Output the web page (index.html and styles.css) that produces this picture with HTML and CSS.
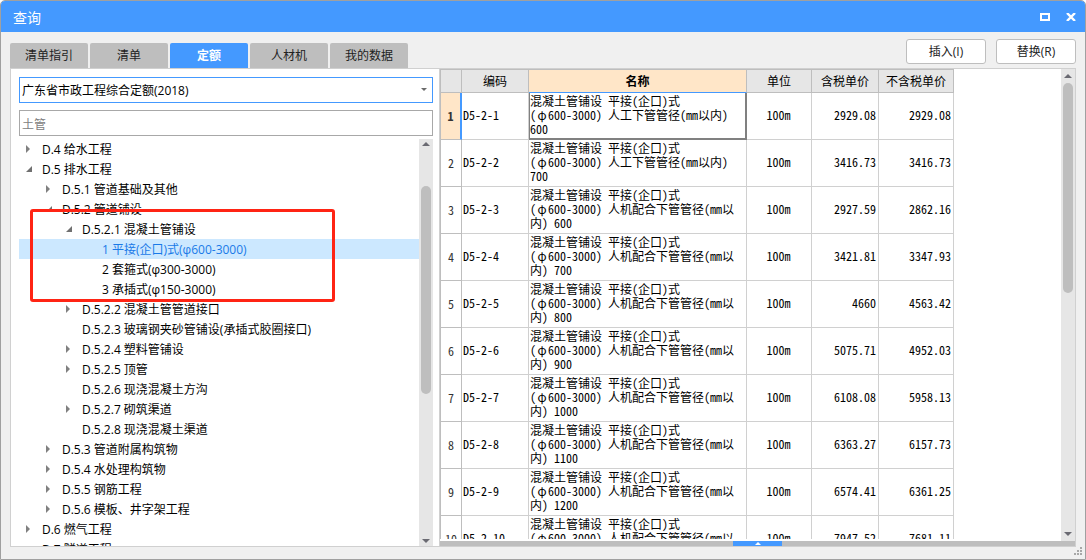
FILE: index.html
```html
<!DOCTYPE html>
<html lang="zh-CN">
<head>
<meta charset="utf-8">
<title>查询</title>
<link rel="stylesheet" href="styles.css">
</head>
<body>
<div class="window">
  <header class="titlebar">
    <h1 class="title">查询</h1>
    <div class="window-buttons">
      <button class="win-btn" type="button" aria-label="最大化"><svg width="10" height="8" viewBox="0 0 10 8"><path d="M0 0H10V8H0ZM2 2V6H8V2Z" fill="#fff" fill-rule="evenodd"/></svg></button>
      <button class="win-btn" type="button" aria-label="关闭"><svg width="10" height="8" viewBox="0 0 10 8"><path d="M1 0L9 8M9 0L1 8" fill="none" stroke="#fff" stroke-width="2.400"/></svg></button>
    </div>
  </header>

  <div class="toolbar">
    <nav class="tabs">
      <button class="tab" type="button">清单指引</button>
      <button class="tab" type="button">清单</button>
      <button class="tab active" type="button">定额</button>
      <button class="tab" type="button">人材机</button>
      <button class="tab" type="button">我的数据</button>
    </nav>
    <div class="actions">
      <button class="action" type="button">插入(I)</button>
      <button class="action" type="button">替换(R)</button>
    </div>
  </div>

  <main class="content">
    <section class="side">
      <div class="select-wrap">
        <select class="library" aria-label="定额库"><option>广东省市政工程综合定额(2018)</option></select>
        <svg class="caret" width="6" height="3" viewBox="0 0 6 3"><path d="M0 0H6L3 3Z" fill="#6a6a6a"/></svg>
      </div>
      <input class="search" type="text" aria-label="搜索" placeholder="土管">
      <div class="tree-area">
        <ul class="tree">
          <li class="node l0 closed"><span class="label">D.4 给水工程</span></li>
          <li class="node l0 open"><span class="label">D.5 排水工程</span></li>
          <li class="node l1 closed"><span class="label">D.5.1 管道基础及其他</span></li>
          <li class="node l1 open"><span class="label">D.5.2 管道铺设</span></li>
          <li class="node l2 open"><span class="label">D.5.2.1 混凝土管铺设</span></li>
          <li class="node l3 selected"><span class="label">1 平接(企口)式(φ600-3000)</span></li>
          <li class="node l3"><span class="label">2 套箍式(φ300-3000)</span></li>
          <li class="node l3"><span class="label">3 承插式(φ150-3000)</span></li>
          <li class="node l2 closed"><span class="label">D.5.2.2 混凝土管管道接口</span></li>
          <li class="node l2"><span class="label">D.5.2.3 玻璃钢夹砂管铺设(承插式胶圈接口)</span></li>
          <li class="node l2 closed"><span class="label">D.5.2.4 塑料管铺设</span></li>
          <li class="node l2 closed"><span class="label">D.5.2.5 顶管</span></li>
          <li class="node l2"><span class="label">D.5.2.6 现浇混凝土方沟</span></li>
          <li class="node l2 closed"><span class="label">D.5.2.7 砌筑渠道</span></li>
          <li class="node l2"><span class="label">D.5.2.8 现浇混凝土渠道</span></li>
          <li class="node l1 closed"><span class="label">D.5.3 管道附属构筑物</span></li>
          <li class="node l1 closed"><span class="label">D.5.4 水处理构筑物</span></li>
          <li class="node l1 closed"><span class="label">D.5.5 钢筋工程</span></li>
          <li class="node l1 closed"><span class="label">D.5.6 模板、井字架工程</span></li>
          <li class="node l0 closed"><span class="label">D.6 燃气工程</span></li>
          <li class="node l0"><span class="label">D.7 隧道工程</span></li>
        </ul>
        <div class="scrollbar tree-scroll">
          <svg width="8" height="4" viewBox="0 0 8 4"><path d="M0 4L4 0L8 4Z" fill="#6a6a72"/></svg>
          <div class="track"><div class="thumb tree-thumb"></div></div>
          <svg width="8" height="4" viewBox="0 0 8 4"><path d="M0 0H8L4 4Z" fill="#6a6a72"/></svg>
        </div>
        <div class="highlight"></div>
      </div>
    </section>

    <section class="main">
      <div class="grid-area">
        <div class="grid-clip">
          <table class="grid">
            <colgroup><col class="c-num"><col class="c-code"><col class="c-name"><col class="c-unit"><col class="c-tax"><col class="c-net"></colgroup>
            <thead>
              <tr><th></th><th>编码</th><th class="current">名称</th><th>单位</th><th>含税单价</th><th>不含税单价</th></tr>
            </thead>
            <tbody>
              <tr class="current-row"><th>1</th><td>D5-2-1</td><td class="cell-active">混凝土管铺设 平接(企口)式<br>(<span class="phi">φ</span>600-3000) 人工下管管径(mm以内)<br>600</td><td class="unit">100m</td><td class="price">2929.08</td><td class="price">2929.08</td></tr>
              <tr><th>2</th><td>D5-2-2</td><td>混凝土管铺设 平接(企口)式<br>(<span class="phi">φ</span>600-3000) 人工下管管径(mm以内)<br>700</td><td class="unit">100m</td><td class="price">3416.73</td><td class="price">3416.73</td></tr>
              <tr><th>3</th><td>D5-2-3</td><td>混凝土管铺设 平接(企口)式<br>(<span class="phi">φ</span>600-3000) 人机配合下管管径(mm以<br>内) 600</td><td class="unit">100m</td><td class="price">2927.59</td><td class="price">2862.16</td></tr>
              <tr><th>4</th><td>D5-2-4</td><td>混凝土管铺设 平接(企口)式<br>(<span class="phi">φ</span>600-3000) 人机配合下管管径(mm以<br>内) 700</td><td class="unit">100m</td><td class="price">3421.81</td><td class="price">3347.93</td></tr>
              <tr><th>5</th><td>D5-2-5</td><td>混凝土管铺设 平接(企口)式<br>(<span class="phi">φ</span>600-3000) 人机配合下管管径(mm以<br>内) 800</td><td class="unit">100m</td><td class="price">4660</td><td class="price">4563.42</td></tr>
              <tr><th>6</th><td>D5-2-6</td><td>混凝土管铺设 平接(企口)式<br>(<span class="phi">φ</span>600-3000) 人机配合下管管径(mm以<br>内) 900</td><td class="unit">100m</td><td class="price">5075.71</td><td class="price">4952.03</td></tr>
              <tr><th>7</th><td>D5-2-7</td><td>混凝土管铺设 平接(企口)式<br>(<span class="phi">φ</span>600-3000) 人机配合下管管径(mm以<br>内) 1000</td><td class="unit">100m</td><td class="price">6108.08</td><td class="price">5958.13</td></tr>
              <tr><th>8</th><td>D5-2-8</td><td>混凝土管铺设 平接(企口)式<br>(<span class="phi">φ</span>600-3000) 人机配合下管管径(mm以<br>内) 1100</td><td class="unit">100m</td><td class="price">6363.27</td><td class="price">6157.73</td></tr>
              <tr><th>9</th><td>D5-2-9</td><td>混凝土管铺设 平接(企口)式<br>(<span class="phi">φ</span>600-3000) 人机配合下管管径(mm以<br>内) 1200</td><td class="unit">100m</td><td class="price">6574.41</td><td class="price">6361.25</td></tr>
              <tr><th>10</th><td>D5-2-10</td><td>混凝土管铺设 平接(企口)式<br>(<span class="phi">φ</span>600-3000) 人机配合下管管径(mm以<br>内) 1350</td><td class="unit">100m</td><td class="price">7947.52</td><td class="price">7681.11</td></tr>
            </tbody>
          </table>
        </div>
        <div class="scrollbar grid-scroll">
          <svg width="8" height="4" viewBox="0 0 8 4"><path d="M0 4L4 0L8 4Z" fill="#6a6a72"/></svg>
          <div class="track"><div class="thumb grid-thumb"></div></div>
          <svg width="8" height="4" viewBox="0 0 8 4"><path d="M0 0H8L4 4Z" fill="#6a6a72"/></svg>
        </div>
      </div>
      <div class="splitter"><button class="splitter-handle" type="button" aria-label="展开"><svg width="6" height="3" viewBox="0 0 6 3"><path d="M0 3L3 0L6 3Z" fill="#fff"/></svg></button></div>
    </section>
  </main>
  <footer class="statusbar">
    <svg width="8" height="8" viewBox="0 0 8 8"><path d="M6 0h2v2h-2zM3 3h2v2h-2zM6 3h2v2h-2zM0 6h2v2h-2zM3 6h2v2h-2zM6 6h2v2h-2z" fill="#a8a8a8"/></svg>
  </footer>
</div>
</body>
</html>
```

FILE: styles.css
```css
* { box-sizing: border-box; }

body {
  margin: 0;
  background: #fff;
  color: #000;
  font: 12px/20px "Open Sans", "Noto Sans CJK SC", sans-serif;
}

button, input, select { font: inherit; color: inherit; margin: 0; }
button { padding: 0; border: 0; }
svg { display: block; flex: none; }

.window {
  display: flex;
  flex-direction: column;
  height: 100vh;
  border: 1px solid #a0a0a0;
  border-radius: 5px 5px 0 0;
  background: #f0f0f0;
  overflow: hidden;
}

.titlebar {
  display: flex;
  justify-content: space-between;
  align-items: center;
  flex: none;
  height: 31px;
  padding: 0 9px 0 12px;
  background: #4499ff;
  color: #fff;
}
.title { margin: 2px 0 0; font-size: 14px; font-weight: 400; }
.window-buttons { display: flex; gap: 16px; }
.win-btn { background: none; }

.toolbar {
  display: flex;
  justify-content: space-between;
  align-items: flex-end;
  flex: none;
  height: 36px;
  padding: 0 9px;
}
.tabs { display: flex; gap: 2px; }
.tab {
  width: 78px;
  height: 25px;
  border-radius: 2px 2px 0 0;
  background: #bebebe;
  color: #222;
}
.tab.active { background: #4499ff; color: #fff; font-weight: 700; }
.actions { display: flex; gap: 10px; padding-bottom: 4px; }
.action {
  width: 80px;
  height: 25px;
  border: 1px solid #bebebe;
  border-radius: 3px;
  background: #fff;
  color: #222;
}

.content {
  display: flex;
  flex: 1;
  min-height: 0;
  margin: 0 9px;
  border: 1px solid #d0d0d0;
  background: #fff;
}

.side {
  display: flex;
  flex-direction: column;
  flex: 0 0 428px;
  padding: 8px 5px 0 8px;
}
.select-wrap { position: relative; flex: none; margin-bottom: 7px; }
.library {
  display: block;
  appearance: none;
  width: 100%;
  height: 26px;
  padding: 2px 16px 0 2px;
  border: 1px solid #4499ff;
  border-radius: 0;
  background: #fff;
}
.caret { position: absolute; right: 6px; top: 11px; }
.search {
  flex: none;
  width: 100%;
  height: 26px;
  padding: 2px 2px 0;
  border: 1px solid #a8a8a8;
  background: #fff;
}
.search::placeholder { color: #808080; opacity: 1; }
.side > .select-wrap, .side > .search { width: 414px; }

.tree-area {
  position: relative;
  display: flex;
  flex: 1;
  min-height: 0;
  width: 414px;
  margin-top: 3px;
}
.tree {
  flex: 1;
  margin: 0;
  padding: 0;
  overflow: hidden;
  list-style: none;
}
.node {
  display: flex;
  align-items: center;
  height: 20px;
  white-space: nowrap;
}
.label { padding-top: 2px; }
.node::before { content: ""; width: 16px; height: 8px; flex: none; }
.closed::before {
  background: #808080;
  clip-path: polygon(0 0, 4px 4px, 0 8px);
}
.open::before {
  background: #707070;
  clip-path: polygon(6px 1px, 6px 7px, 0 7px);
}
.l0 { padding-left: 7px; }
.l1 { padding-left: 27px; }
.l2 { padding-left: 47px; }
.l3 { padding-left: 67px; }
.selected { background: #cce8ff; color: #1a7ae8; }

.highlight {
  position: absolute;
  left: 11px;
  top: 70px;
  width: 305px;
  height: 93px;
  border: 3px solid #ff2414;
  border-radius: 3px;
}

.scrollbar {
  display: flex;
  flex-direction: column;
  align-items: center;
  gap: 4px;
  flex: none;
  width: 14px;
  background: #e6e6e6;
}
.tree-scroll { padding: 3px 0; }
.grid-scroll { padding: 5px 0; }
.track { flex: 1; }
.thumb { width: 10px; border-radius: 5px; background: #bebebe; }
.tree-thumb { height: 208px; margin-top: 36px; }
.grid-thumb { height: 210px; margin-top: 1px; }

.main {
  display: flex;
  flex-direction: column;
  flex: 1;
  min-width: 0;
  border-left: 1px solid #d0d0d0;
}
.grid-area { display: flex; flex: 1; min-height: 0; }
.grid-clip { flex: 1; min-width: 0; margin-bottom: 2px; overflow: hidden; }

.grid {
  table-layout: fixed;
  width: 514px;
  border-spacing: 0;
  border-top: 1px solid #bebebe;
  border-left: 1px solid #bebebe;
  font: 12px/14px "Noto Sans Mono CJK SC", "Noto Sans CJK SC", monospace;
}
.c-num { width: 21px; }
.c-code { width: 67px; }
.c-name { width: 218px; }
.c-unit { width: 65px; }
.c-tax { width: 67px; }
.c-net { width: 75px; }
.grid th, .grid td {
  border-right: 1px solid #d0d0d0;
  border-bottom: 1px solid #d0d0d0;
  white-space: nowrap;
}
.grid td { height: 47px; padding: 1px 2px 3px 1px; text-align: left; }
.grid th { padding: 0; font-weight: 400; border-color: #bebebe; }
.grid thead th { height: 23px; background: #e6e6e6; }
.grid tbody th { color: #333; }
.grid thead .current {
  background: #ffe6c8;
  border-bottom-color: #4499ff;
  font-weight: 700;
}
.grid .current-row th {
  background: #ffe6c8;
  border-right: 2px solid #4499ff;
  font-weight: 700;
}
.grid .cell-active {
  border-color: #808080;
  box-shadow: inset -1px -1px #808080, inset 1px 0 #808080;
}
.grid .unit { text-align: center; }
.grid .price { text-align: right; }
.phi { display: inline-block; width: 12px; text-align: center; }

.splitter {
  display: flex;
  justify-content: center;
  flex: none;
  height: 5px;
  background: #bebebe;
}
.splitter-handle {
  display: flex;
  align-items: center;
  justify-content: center;
  width: 49px;
  height: 5px;
  background: #4499ff;
}

.statusbar {
  display: flex;
  justify-content: flex-end;
  flex: none;
  height: 12px;
  padding: 0 3px;
}
```
